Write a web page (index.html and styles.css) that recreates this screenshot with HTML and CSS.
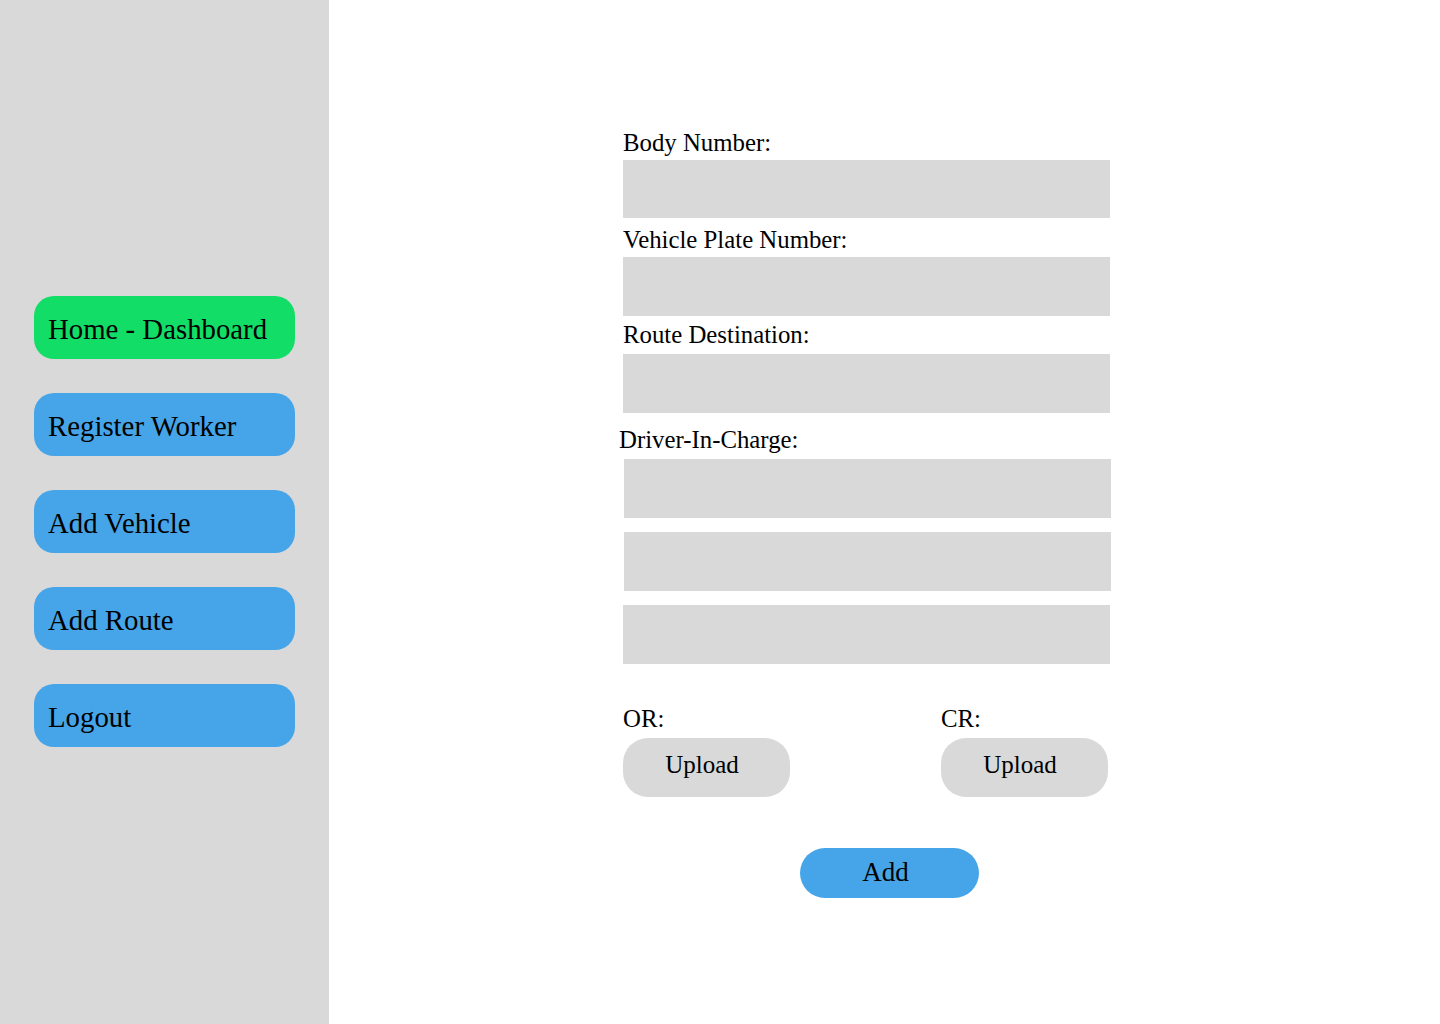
FILE: index.html
```html
<!DOCTYPE html>
<html lang="en">
<head>
<meta charset="utf-8">
<title>Add Vehicle</title>
<link rel="stylesheet" href="styles.css">
</head>
<body>
<div class="app">
  <aside class="sidebar">
    <nav class="nav">
      <a class="nav-btn nav-btn--active" href="#">Home - Dashboard</a>
      <a class="nav-btn" href="#">Register Worker</a>
      <a class="nav-btn" href="#">Add Vehicle</a>
      <a class="nav-btn" href="#">Add Route</a>
      <a class="nav-btn" href="#">Logout</a>
    </nav>
  </aside>
  <main class="main">
    <form class="form">
      <label class="field-label">Body Number:</label>
      <input class="field field--short" type="text">
      <label class="field-label">Vehicle Plate Number:</label>
      <input class="field" type="text">
      <label class="field-label field-label--route">Route Destination:</label>
      <input class="field" type="text">
      <label class="field-label field-label--driver">Driver-In-Charge:</label>
      <div class="driver-list">
        <input class="field field--nudge" type="text">
        <input class="field field--nudge" type="text">
        <input class="field" type="text">
      </div>
      <div class="uploads">
        <div class="upload-group">
          <span class="upload-label">OR:</span>
          <button class="upload-btn" type="button">Upload</button>
        </div>
        <div class="upload-group">
          <span class="upload-label">CR:</span>
          <button class="upload-btn" type="button">Upload</button>
        </div>
      </div>
      <button class="add-btn" type="button">Add</button>
    </form>
  </main>
</div>
</body>
</html>
```

FILE: styles.css
```css
* {
  box-sizing: border-box;
}

html, body {
  margin: 0;
  padding: 0;
  background: #ffffff;
  font-family: "Liberation Serif", "Times New Roman", serif;
  color: #000000;
}

.app {
  display: flex;
  min-height: 1024px;
}

.sidebar {
  width: 329px;
  flex: 0 0 329px;
  background: #d9d9d9;
  padding: 296px 34px 0 34px;
}

.nav {
  display: flex;
  flex-direction: column;
  gap: 34px;
}

.nav-btn {
  display: block;
  width: 261px;
  height: 63px;
  padding: 5px 0 0 14px;
  line-height: 56px;
  font-size: 28.8px;
  color: #000000;
  text-decoration: none;
  background: #46a5e8;
  border-radius: 20px;
  white-space: nowrap;
}

.nav-btn--active {
  background: #12dd66;
}

.main {
  flex: 1;
  padding: 122px 0 0 294px;
}

.form {
  width: 487px;
  display: flex;
  flex-direction: column;
  align-items: flex-start;
}

.field-label {
  display: block;
  padding-top: 7px;
  margin-bottom: 3px;
  line-height: 28px;
  font-size: 24.8px;
}

.field-label--route {
  padding-top: 5px;
  margin-bottom: 5px;
}

.field-label--driver {
  padding-top: 13px;
  margin-bottom: 5px;
  margin-left: -4px;
}

.field {
  display: block;
  width: 487px;
  height: 59px;
  border: none;
  outline: none;
  background: #d9d9d9;
  margin: 0;
  padding: 0 10px;
  font: inherit;
}

.field--short {
  height: 58px;
  margin-bottom: 1px;
}

.field--nudge {
  margin-left: 1px;
}

.driver-list {
  display: flex;
  flex-direction: column;
  gap: 14px;
}

.uploads {
  display: flex;
  gap: 151px;
  margin-top: 41px;
}

.upload-group {
  display: flex;
  flex-direction: column;
  align-items: flex-start;
  gap: 5px;
}

.upload-label {
  display: block;
  line-height: 28px;
  font-size: 24.8px;
}

.upload-btn {
  width: 167px;
  height: 59px;
  border: none;
  border-radius: 25px;
  background: #d9d9d9;
  padding: 0 9px 6px 0;
  line-height: 53px;
  font-family: inherit;
  font-size: 25px;
  color: #000000;
  text-align: center;
  cursor: pointer;
}

.add-btn {
  margin: 51px 0 0 177px;
  width: 179px;
  height: 50px;
  border: none;
  border-radius: 25px;
  background: #46a5e8;
  padding: 0 8px 2px 0;
  line-height: 48px;
  font-family: inherit;
  font-size: 27px;
  color: #000000;
  text-align: center;
  cursor: pointer;
}
```
